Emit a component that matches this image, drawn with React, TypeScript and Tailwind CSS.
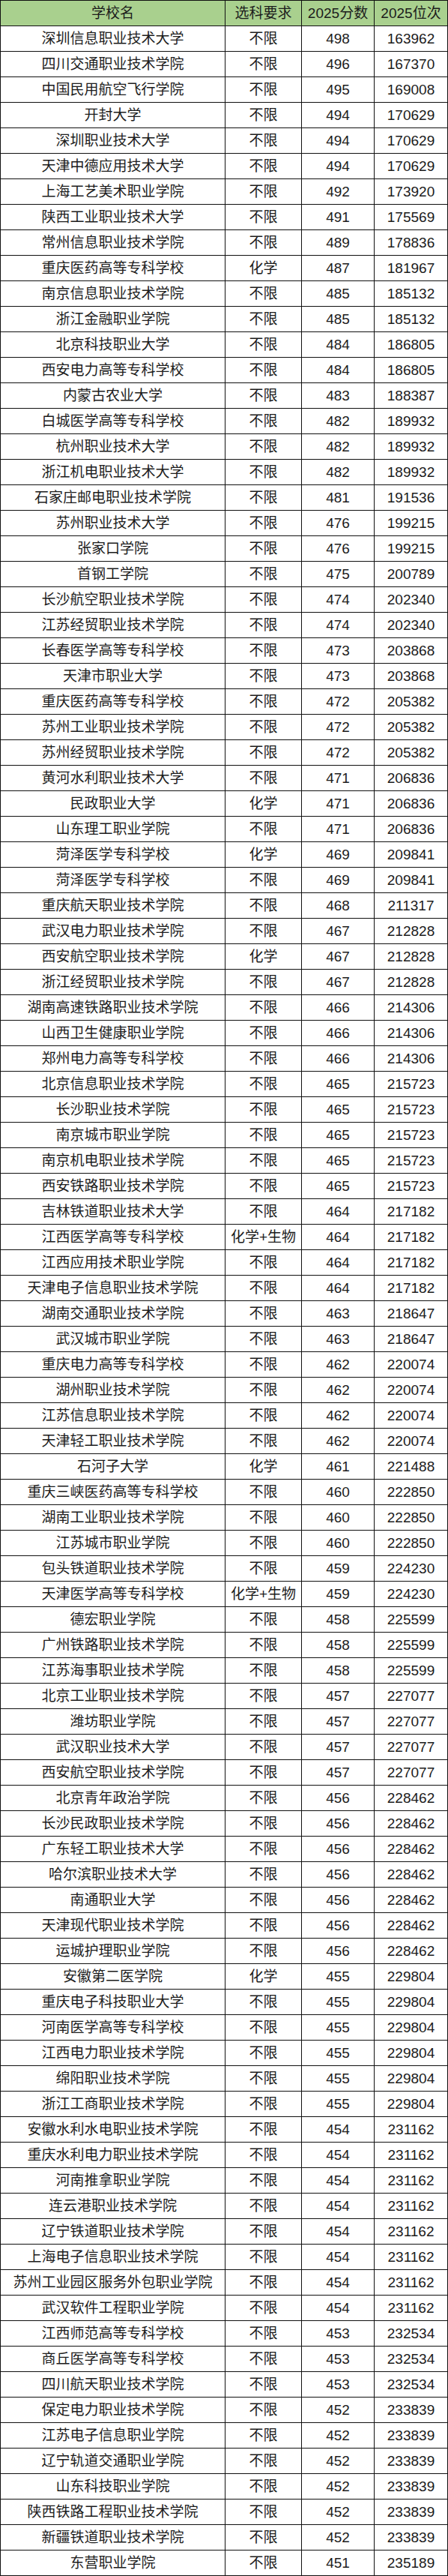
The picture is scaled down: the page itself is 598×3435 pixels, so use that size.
import React from 'react';

type Row = [string, string, number, number];

const rows: Row[] = [
  ['深圳信息职业技术大学', '不限', 498, 163962],
  ['四川交通职业技术学院', '不限', 496, 167370],
  ['中国民用航空飞行学院', '不限', 495, 169008],
  ['开封大学', '不限', 494, 170629],
  ['深圳职业技术大学', '不限', 494, 170629],
  ['天津中德应用技术大学', '不限', 494, 170629],
  ['上海工艺美术职业学院', '不限', 492, 173920],
  ['陕西工业职业技术大学', '不限', 491, 175569],
  ['常州信息职业技术学院', '不限', 489, 178836],
  ['重庆医药高等专科学校', '化学', 487, 181967],
  ['南京信息职业技术学院', '不限', 485, 185132],
  ['浙江金融职业学院', '不限', 485, 185132],
  ['北京科技职业大学', '不限', 484, 186805],
  ['西安电力高等专科学校', '不限', 484, 186805],
  ['内蒙古农业大学', '不限', 483, 188387],
  ['白城医学高等专科学校', '不限', 482, 189932],
  ['杭州职业技术大学', '不限', 482, 189932],
  ['浙江机电职业技术大学', '不限', 482, 189932],
  ['石家庄邮电职业技术学院', '不限', 481, 191536],
  ['苏州职业技术大学', '不限', 476, 199215],
  ['张家口学院', '不限', 476, 199215],
  ['首钢工学院', '不限', 475, 200789],
  ['长沙航空职业技术学院', '不限', 474, 202340],
  ['江苏经贸职业技术学院', '不限', 474, 202340],
  ['长春医学高等专科学校', '不限', 473, 203868],
  ['天津市职业大学', '不限', 473, 203868],
  ['重庆医药高等专科学校', '不限', 472, 205382],
  ['苏州工业职业技术学院', '不限', 472, 205382],
  ['苏州经贸职业技术学院', '不限', 472, 205382],
  ['黄河水利职业技术大学', '不限', 471, 206836],
  ['民政职业大学', '化学', 471, 206836],
  ['山东理工职业学院', '不限', 471, 206836],
  ['菏泽医学专科学校', '化学', 469, 209841],
  ['菏泽医学专科学校', '不限', 469, 209841],
  ['重庆航天职业技术学院', '不限', 468, 211317],
  ['武汉电力职业技术学院', '不限', 467, 212828],
  ['西安航空职业技术学院', '化学', 467, 212828],
  ['浙江经贸职业技术学院', '不限', 467, 212828],
  ['湖南高速铁路职业技术学院', '不限', 466, 214306],
  ['山西卫生健康职业学院', '不限', 466, 214306],
  ['郑州电力高等专科学校', '不限', 466, 214306],
  ['北京信息职业技术学院', '不限', 465, 215723],
  ['长沙职业技术学院', '不限', 465, 215723],
  ['南京城市职业学院', '不限', 465, 215723],
  ['南京机电职业技术学院', '不限', 465, 215723],
  ['西安铁路职业技术学院', '不限', 465, 215723],
  ['吉林铁道职业技术大学', '不限', 464, 217182],
  ['江西医学高等专科学校', '化学+生物', 464, 217182],
  ['江西应用技术职业学院', '不限', 464, 217182],
  ['天津电子信息职业技术学院', '不限', 464, 217182],
  ['湖南交通职业技术学院', '不限', 463, 218647],
  ['武汉城市职业学院', '不限', 463, 218647],
  ['重庆电力高等专科学校', '不限', 462, 220074],
  ['湖州职业技术学院', '不限', 462, 220074],
  ['江苏信息职业技术学院', '不限', 462, 220074],
  ['天津轻工职业技术学院', '不限', 462, 220074],
  ['石河子大学', '化学', 461, 221488],
  ['重庆三峡医药高等专科学校', '不限', 460, 222850],
  ['湖南工业职业技术学院', '不限', 460, 222850],
  ['江苏城市职业学院', '不限', 460, 222850],
  ['包头铁道职业技术学院', '不限', 459, 224230],
  ['天津医学高等专科学校', '化学+生物', 459, 224230],
  ['德宏职业学院', '不限', 458, 225599],
  ['广州铁路职业技术学院', '不限', 458, 225599],
  ['江苏海事职业技术学院', '不限', 458, 225599],
  ['北京工业职业技术学院', '不限', 457, 227077],
  ['潍坊职业学院', '不限', 457, 227077],
  ['武汉职业技术大学', '不限', 457, 227077],
  ['西安航空职业技术学院', '不限', 457, 227077],
  ['北京青年政治学院', '不限', 456, 228462],
  ['长沙民政职业技术学院', '不限', 456, 228462],
  ['广东轻工职业技术大学', '不限', 456, 228462],
  ['哈尔滨职业技术大学', '不限', 456, 228462],
  ['南通职业大学', '不限', 456, 228462],
  ['天津现代职业技术学院', '不限', 456, 228462],
  ['运城护理职业学院', '不限', 456, 228462],
  ['安徽第二医学院', '化学', 455, 229804],
  ['重庆电子科技职业大学', '不限', 455, 229804],
  ['河南医学高等专科学校', '不限', 455, 229804],
  ['江西电力职业技术学院', '不限', 455, 229804],
  ['绵阳职业技术学院', '不限', 455, 229804],
  ['浙江工商职业技术学院', '不限', 455, 229804],
  ['安徽水利水电职业技术学院', '不限', 454, 231162],
  ['重庆水利电力职业技术学院', '不限', 454, 231162],
  ['河南推拿职业学院', '不限', 454, 231162],
  ['连云港职业技术学院', '不限', 454, 231162],
  ['辽宁铁道职业技术学院', '不限', 454, 231162],
  ['上海电子信息职业技术学院', '不限', 454, 231162],
  ['苏州工业园区服务外包职业学院', '不限', 454, 231162],
  ['武汉软件工程职业学院', '不限', 454, 231162],
  ['江西师范高等专科学校', '不限', 453, 232534],
  ['商丘医学高等专科学校', '不限', 453, 232534],
  ['四川航天职业技术学院', '不限', 453, 232534],
  ['保定电力职业技术学院', '不限', 452, 233839],
  ['江苏电子信息职业学院', '不限', 452, 233839],
  ['辽宁轨道交通职业学院', '不限', 452, 233839],
  ['山东科技职业学院', '不限', 452, 233839],
  ['陕西铁路工程职业技术学院', '不限', 452, 233839],
  ['新疆铁道职业技术学院', '不限', 452, 233839],
  ['东营职业学院', '不限', 451, 235189],
];

const rowClass =
  'grid grid-cols-[300px_102px_97px_98px] h-[34px] border-b border-[#111]';
const cellClass = 'flex items-center justify-center border-r border-[#111] whitespace-nowrap';

export default function App() {
  return (
    <div className="w-[598px] bg-white text-[#1c1c1c] text-[19px] leading-none font-['Liberation_Sans','Noto_Sans_CJK_SC',sans-serif]">
      <div className="border-l border-t border-[#111]">
        <div className={`${rowClass} bg-[#a9d08e]`}>
          <div className={cellClass}>学校名</div>
          <div className={cellClass}>选科要求</div>
          <div className={cellClass}>2025分数</div>
          <div className={cellClass}>2025位次</div>
        </div>
        {rows.map(([name, req, score, rank], i) => (
          <div key={i} className={rowClass}>
            <div className={cellClass}>{name}</div>
            <div className={cellClass}>{req}</div>
            <div className={cellClass}>{score}</div>
            <div className={cellClass}>{rank}</div>
          </div>
        ))}
      </div>
    </div>
  );
}
